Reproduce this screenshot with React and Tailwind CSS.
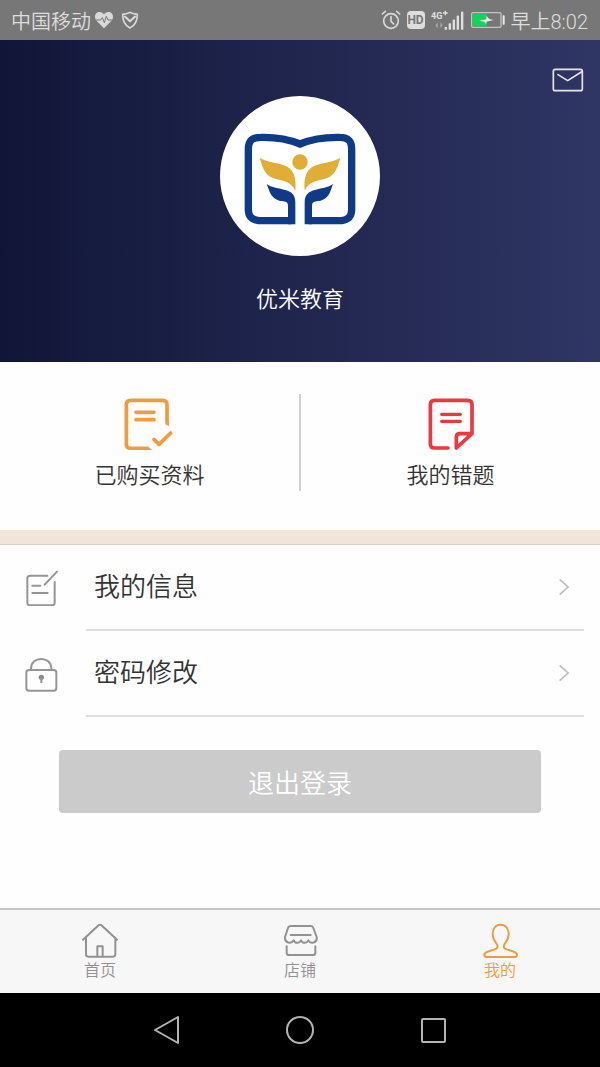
import React, { useState } from 'react';
import clsx from 'clsx';

// ── Status bar icons ────────────────────────────────────────────────────────

const HeartIcon = () => (
  <svg width="20" height="18" viewBox="0 0 60 54" fill="none" aria-hidden="true">
    <path d="M30 52 8 30C-2 18 4 3 17 3c6 0 10 3 13 7 3-4 7-7 13-7 13 0 19 15 9 27z" fill="#d9d9d9" />
    <path d="M4 27h16l5-7 6 15 6-19 5 11h14" stroke="#777" strokeWidth="3" />
  </svg>
);

const ShieldIcon = () => (
  <svg width="18" height="18" viewBox="0 0 54 54" fill="none" stroke="#d9d9d9" strokeWidth="5" strokeLinejoin="round" aria-hidden="true">
    <path d="M27 4c-6 4-13 5-22 6 0 20 6 34 22 41 16-7 22-21 22-41-9-1-16-2-22-6z" />
    <path d="M10 15l17 16 17-16" strokeWidth="6" />
  </svg>
);

const AlarmIcon = () => (
  <svg width="20" height="20" viewBox="0 0 60 60" fill="none" stroke="#d9d9d9" strokeWidth="5" strokeLinecap="round" aria-hidden="true">
    <circle cx="30" cy="33" r="22" />
    <path d="M30 20v14l8 8M4 12l9-8M56 12l-9-8" />
  </svg>
);

const SignalIcon = () => (
  <svg width="34" height="22" viewBox="0 0 102 66" aria-hidden="true">
    <text x="0" y="29" fontSize="27" fontWeight="700" fontFamily="Roboto, sans-serif" fill="#e0e0e0">4G</text>
    <path d="M43 5v14M36 12h14" stroke="#e0e0e0" strokeWidth="4" />
    <path d="M20 40v18l-7-8zM28 58V40l7 8z" fill="#a8a8a8" />
    <g fill="#e0e0e0">
      <rect x="41" y="54" width="7" height="8" />
      <rect x="53" y="43" width="7" height="19" />
      <rect x="65" y="32" width="7" height="30" />
      <rect x="77" y="20" width="7" height="42" />
      <rect x="90" y="8" width="7" height="54" />
    </g>
  </svg>
);

const BatteryIcon = () => (
  <svg width="34" height="18" viewBox="0 0 102 54" aria-hidden="true">
    <rect x="2" y="5" width="88" height="44" rx="4" fill="none" stroke="#c4c4c4" strokeWidth="4" />
    <rect x="5" y="8" width="42" height="38" fill="#10d45c" />
    <path d="M24 29 46 25V14l9 10 13 3-22 5v8l-6-8z" fill="#e8e8e8" />
    <rect x="95" y="13" width="6" height="28" rx="2" fill="#e8e8e8" />
  </svg>
);

// ── Page icons ──────────────────────────────────────────────────────────────

const MailIcon = () => (
  <svg width="32" height="24" viewBox="0 0 96 72" fill="none" stroke="#e6e7ee" strokeWidth="5" strokeLinecap="round" strokeLinejoin="round" aria-hidden="true">
    <rect x="4" y="4" width="87" height="64" rx="6" />
    <path d="M18 20l29 18 41-26" />
  </svg>
);

const LogoIcon = () => (
  <svg className="h-40 w-40" viewBox="-58 -87 480 480" aria-hidden="true">
    <path
      d="M157 287H58C36 284 27 274 27 253V73C27 46 39 37 64 37C106 36 144 41 182 57C220 41 258 36 302 37C326 37 337 47 337 73V253C337 274 328 284 307 287H207"
      fill="none"
      stroke="#0f3a85"
      strokeWidth="22"
    />
    <path d="M82 177C96 188 120 190 138 195C158 200 168 211 168 232V298H146V242C146 234 142 230 132 229C96 226 92 202 82 177z" fill="#0f3a85" />
    <path d="M281 177C267 188 244 190 226 195C206 200 196 211 196 232V298H218V242C218 234 222 230 232 229C268 226 272 202 281 177z" fill="#0f3a85" />
    <path d="M61 98C82 112 114 112 138 122C162 132 172 156 168 197C156 172 136 168 110 162C78 154 70 130 61 98z" fill="#e0ad35" />
    <path d="M303 98C282 112 250 112 226 122C202 132 192 156 196 197C208 172 228 168 254 162C286 154 294 130 303 98z" fill="#e0ad35" />
    <circle cx="182" cy="111" r="23" fill="#e0ad35" />
  </svg>
);

const PurchasedIcon = () => (
  <svg width="52" height="52" viewBox="0 0 156 156" fill="none" stroke="#f29b3c" strokeWidth="11" strokeLinejoin="round" aria-hidden="true">
    <path d="M129 74V20q0-13-13-13H20Q7 7 7 20v118q0 13 13 13h54" />
    <path d="M124 73v6l11 5V73zM73 146l12 10H73z" fill="#f29b3c" stroke="none" />
    <path d="M36 43h54M36 65h54M90 124l15 15 35-34" strokeLinecap="round" />
  </svg>
);

const MistakesIcon = () => (
  <svg width="46" height="52" viewBox="0 0 138 156" fill="none" stroke="#ec383e" strokeWidth="11" strokeLinecap="round" strokeLinejoin="round" aria-hidden="true">
    <path d="M60 150H20q-13 0-13-13V20Q7 7 20 7h99q13 0 13 13v87l-47 43v-33q0-10 11-10h36" />
    <path d="M41 49h56M41 70h56" strokeWidth="10" />
  </svg>
);

const EditIcon = () => (
  <svg width="34" height="36" viewBox="0 0 102 108" fill="none" stroke="#959595" strokeWidth="6" strokeLinecap="round" strokeLinejoin="round" aria-hidden="true">
    <path d="M70 17H18q-8 0-8 8v73q0 8 8 8h66q8 0 8-8V36" />
    <path d="M99 5 62 44M25 47h24M25 69h46" />
  </svg>
);

const LockIcon = () => (
  <svg width="34" height="36" viewBox="0 0 102 108" fill="none" stroke="#959595" strokeWidth="6" aria-hidden="true">
    <rect x="7" y="42" width="90" height="62" rx="8" />
    <path d="M21 42V38C21-1 82-1 82 38v4" />
    <circle cx="52" cy="64" r="8" fill="#8a8a8a" stroke="none" />
    <path d="M52 65v16" />
  </svg>
);

const ChevronIcon = () => (
  <svg width="12" height="18" viewBox="0 0 36 54" fill="none" stroke="#bdbdbd" strokeWidth="5" aria-hidden="true">
    <path d="M5 4l25 23L5 50" />
  </svg>
);

const HomeIcon = () => (
  <svg width="36" height="36" viewBox="0 0 108 108" fill="none" stroke="currentColor" strokeWidth="6" strokeLinecap="round" strokeLinejoin="round" aria-hidden="true">
    <path d="M3 50 48 8q6-5 12 0l45 42M12 44v50q0 7 7 7h74q7 0 7-7V44" />
    <path d="M46 100V70h16v30" />
  </svg>
);

const ShopIcon = () => (
  <svg width="36" height="36" viewBox="0 0 108 108" fill="none" stroke="currentColor" strokeWidth="6" strokeLinecap="round" strokeLinejoin="round" aria-hidden="true">
    <path d="M27 9h59q6 0 8 6l10 27c3 19-19 22-25 10-5 10-18 10-22 0-5 10-18 10-22 0-7 12-28 9-26-10l9-27q2-6 9-6z" />
    <path d="M26 36h60M14 70v19q0 7 7 7h72q7 0 7-7V70" />
  </svg>
);

const UserIcon = () => (
  <svg width="36" height="36" viewBox="0 0 108 108" fill="none" stroke="currentColor" strokeWidth="6" strokeLinejoin="round" aria-hidden="true">
    <path d="M56 5C40 5 32 18 32 34c0 13 6 20 12 29 6 10 1 14-8 17C23 84 7 87 7 95q0 7 8 7h82q8 0 8-7c0-8-16-11-29-15-9-3-14-7-8-17 6-9 12-16 12-29C80 18 72 5 56 5z" />
  </svg>
);

const menuItems = [
  { label: '我的信息', Icon: EditIcon },
  { label: '密码修改', Icon: LockIcon },
];

const tabs = [
  { id: 'home', label: '首页', Icon: HomeIcon },
  { id: 'shop', label: '店铺', Icon: ShopIcon },
  { id: 'mine', label: '我的', Icon: UserIcon },
];

function StatusBar() {
  return (
    <div className="flex h-10 items-center justify-between bg-[#777777] pr-3 pl-[11px] text-xl text-[#dedede]">
      <div className="flex items-center gap-[3px]">
        <span className="pt-[3px]">中国移动</span>
        <HeartIcon />
        <span className="ml-1"><ShieldIcon /></span>
      </div>
      <div className="flex items-center gap-[6px]">
        <AlarmIcon />
        <span className="flex h-[18px] w-[18px] items-center justify-center rounded-sm bg-[#dedede] text-xs font-bold text-[#777777]">HD</span>
        <SignalIcon />
        <BatteryIcon />
        <span className="pt-[3px]">早上8:02</span>
      </div>
    </div>
  );
}

function ProfileHeader() {
  return (
    <header className="flex h-[322px] flex-col items-center bg-linear-to-r from-[#111638] to-[#2f3664] pt-7">
      <button aria-label="消息" className="mr-4 self-end">
        <MailIcon />
      </button>
      <div className="mt-1 rounded-full bg-white">
        <LogoIcon />
      </div>
      <h1 className="mt-7 text-[22px] leading-8 font-[350] text-white">优米教育</h1>
    </header>
  );
}

function TabBar({ active, onChange }) {
  return (
    <nav className="flex h-[85px] border-t-2 border-[#c4c4c4] bg-[#f7f7f7]">
      {tabs.map(({ id, label, Icon }) => (
        <button
          key={id}
          onClick={() => onChange(id)}
          className={clsx(
            'flex flex-1 flex-col items-center pt-[13px] text-base leading-6',
            active === id ? 'text-[#f29b3c]' : 'text-[#929292]'
          )}
        >
          <Icon />
          <span>{label}</span>
        </button>
      ))}
    </nav>
  );
}

function SystemNav() {
  return (
    <div className="flex h-[74px] items-center justify-center gap-[105px] bg-black">
      <button aria-label="返回">
        <svg width="28" height="30" viewBox="0 0 28 30" fill="none" stroke="#b4b4b4" strokeWidth="2" strokeLinejoin="round">
          <path d="M25 2v26L2 15z" />
        </svg>
      </button>
      <button aria-label="主屏幕">
        <svg width="28" height="28" viewBox="0 0 28 28" fill="none" stroke="#b4b4b4" strokeWidth="2">
          <circle cx="14" cy="14" r="13" />
        </svg>
      </button>
      <button aria-label="最近任务">
        <svg width="28" height="28" viewBox="0 0 28 28" fill="none" stroke="#b4b4b4" strokeWidth="2">
          <rect x="3" y="3" width="23" height="23" rx="1" />
        </svg>
      </button>
    </div>
  );
}

export default function App() {
  const [activeTab, setActiveTab] = useState('mine');

  return (
    <div className="flex min-h-screen flex-col bg-[#fefefe] font-[Roboto,'Noto_Sans_CJK_SC',sans-serif] font-[350] text-[#333333]">
      <StatusBar />
      <ProfileHeader />

      <main className="flex-1">
        {/* Shortcuts */}
        <section className="flex h-[168px] pt-8">
          <button className="flex flex-1 flex-col items-center pt-1 text-[22px] leading-8">
            <PurchasedIcon />
            <span className="mt-[10px]">已购买资料</span>
          </button>
          <div className="h-[97px] w-[2px] bg-[#d0d0d0]" />
          <button className="flex flex-1 flex-col items-center pt-1 text-[22px] leading-8">
            <MistakesIcon />
            <span className="mt-[10px]">我的错题</span>
          </button>
        </section>

        <div className="h-[15px] border-b border-[#d6cdc8] bg-[#f1e5da]" />

        {/* Menu */}
        <ul>
          {menuItems.map(({ label, Icon }) => (
            <li key={label} className="pr-4 pl-6">
              <button className="flex w-full items-center text-left">
                <Icon />
                <span className="ml-7 flex h-[86px] flex-1 items-center justify-between border-b-2 border-[#dedede] pr-[14px] pl-2 text-[26px]">
                  {label}
                  <ChevronIcon />
                </span>
              </button>
            </li>
          ))}
        </ul>

        <div className="px-[59px] pt-[33px]">
          <button className="h-[63px] w-full rounded-sm bg-[#cbcbcb] pt-[6px] text-[26px] text-white">退出登录</button>
        </div>
      </main>

      <TabBar active={activeTab} onChange={setActiveTab} />
      <SystemNav />
    </div>
  );
}
